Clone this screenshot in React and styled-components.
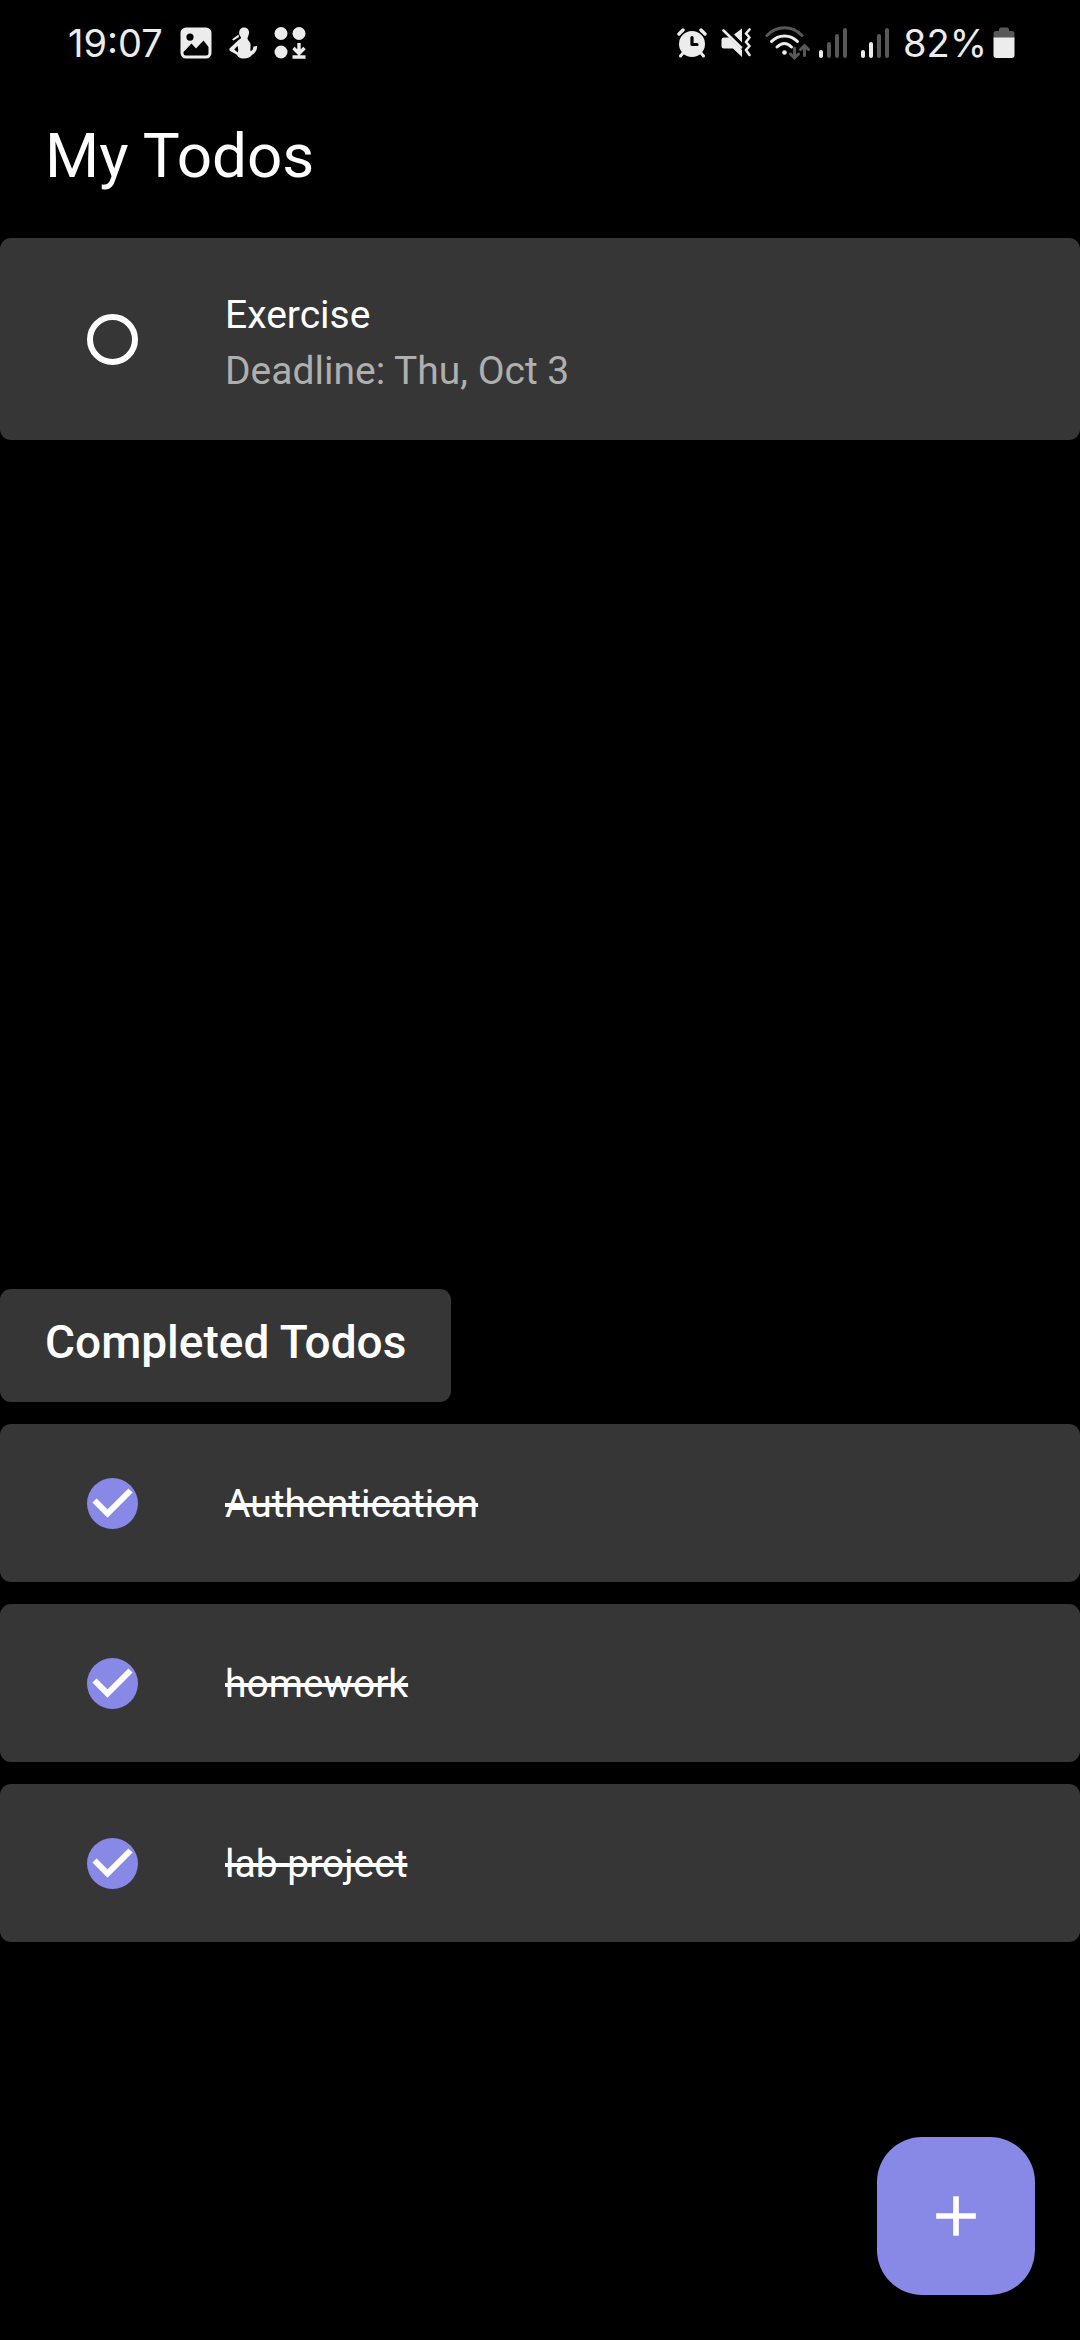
import React, { useState } from "react";
import styled, { createGlobalStyle } from "styled-components";

const GlobalStyle = createGlobalStyle`
  * { box-sizing: border-box; }
  html, body, #root { height: 100%; }
  body {
    margin: 0;
    background: #000;
    color: #fff;
    font-family: Roboto, "Liberation Sans", sans-serif;
  }
`;

const Screen = styled.div`
  min-height: 100vh;
  display: flex;
  flex-direction: column;
`;

const StatusBar = styled.div`
  display: flex;
  justify-content: space-between;
  align-items: center;
  height: 86px;
  padding: 0 65px 0 68px;
  font-family: Inter, Roboto, sans-serif;
  font-size: 38px;
  line-height: 46px;
  color: #ececec;
`;

const StatusGroup = styled.div`
  display: flex;
  align-items: center;
  gap: ${(p) => p.$gap}px;
`;

const Glyph = styled.svg`
  display: block;
  flex: none;
`;

const AppBar = styled.header`
  display: flex;
  align-items: center;
  height: 140px;
  padding: 0 45px;
  margin-bottom: 12px;
`;

const Title = styled.h1`
  margin: 0;
  font-size: 62px;
  line-height: 78px;
  font-weight: 400;
`;

const Main = styled.main`
  flex: 1;
  display: grid;
  grid-template-rows: 1fr 1fr;
`;

const List = styled.ul`
  display: flex;
  flex-direction: column;
  gap: 22px;
  margin: 0;
  padding: 0;
  list-style: none;
`;

const Section = styled.section`
  display: flex;
  flex-direction: column;
  align-items: stretch;
  gap: 22px;
`;

const SectionLabel = styled.h2`
  align-self: flex-start;
  margin: 0;
  padding: 19px 45px 25px;
  border-radius: 11px;
  background: #363636;
  font-size: 46px;
  line-height: 69px;
  font-weight: 500;
`;

const Card = styled.li`
  display: flex;
  align-items: center;
  min-height: ${(p) => (p.$tall ? 202 : 158)}px;
  padding: 0 45px;
  border-radius: 11px;
  background: #363636;
`;

const Todo = styled.label`
  display: flex;
  align-items: center;
  gap: 45px;
  cursor: pointer;
`;

const Tick = styled.span`
  display: grid;
  place-items: center;
  width: 135px;
  height: 135px;

  & > * { grid-area: 1 / 1; }
`;

const TickInput = styled.input`
  appearance: none;
  width: 51px;
  height: 51px;
  margin: 0;
  border: 6px solid #fff;
  border-radius: 50%;

  &:checked {
    border: 0;
    background: #8888e6;
  }
`;

const TickMark = styled(Glyph)`
  pointer-events: none;
`;

const TodoText = styled.span`
  display: flex;
  flex-direction: column;
  padding-top: ${(p) => (p.$tall ? 8 : 2)}px;
  font-size: 39px;
  line-height: 56px;
`;

const TodoName = styled.span`
  text-decoration: ${(p) => (p.$done ? "line-through" : "none")};
  text-decoration-thickness: 4px;
`;

const Deadline = styled.span`
  color: #afafaf;
`;

const AddButton = styled.button`
  position: fixed;
  right: 45px;
  bottom: 45px;
  display: grid;
  place-items: center;
  width: 158px;
  height: 158px;
  padding: 0;
  border: 0;
  border-radius: 45px;
  background: #8888e6;
  color: #fff;
  cursor: pointer;
`;

const PictureIcon = () => (
  <Glyph width="32" height="32" viewBox="0 0 32 32" fill="currentColor">
    <path
      fillRule="evenodd"
      d="M6 0.5h20a5.500 5.500 0 0 1 5.500 5.500v20a5.500 5.500 0 0 1-5.500 5.500H6A5.500 5.500 0 0 1 .5 26V6A5.500 5.500 0 0 1 6 .5zM10 6.500a3.600 3.600 0 1 0 0 7.200 3.600 3.600 0 0 0 0-7.200zM3.500 25l8-8.500 4.500 5 7.500-8L28.500 20v6q0 2.500-2.500 2.500H6q-2.500 0-2.500-2.500z"
    />
  </Glyph>
);

const PersonIcon = () => (
  <Glyph width="28" height="32" viewBox="0 0 28 32" fill="currentColor">
    <path
      fillRule="evenodd"
      d="M15 .5c3.500 0 5.300 2.500 5 5.500-.2 2.500-1.500 4-1.500 5.500 0 2 2.500 3 3 5.500.4 2.500-.5 5.500 0 7 2.500-.5 2.500-2 3-4.500l3.500-.5c.5 4-2 7-5 9-2 2-4 3.500-8 3.500-5 0-6-2-7.500-4L1 24q-1.500-1.500 0-3l8-7.500c1-1.200 2.500-1 3-2.500.3-1-1.500-2-1.800-4C9.800 3.500 11.500.5 15 .5zM8.500 19l-3.300 3.500 3.600 3q1-3-.3-6.500zM9.500 7.500l-6.500 5 1.500 1 5.500-3.500z"
    />
  </Glyph>
);

const AppsIcon = () => (
  <Glyph width="32" height="32" viewBox="0 0 32 32" fill="currentColor">
    <circle cx="7" cy="6.500" r="6.500" />
    <circle cx="25" cy="6.500" r="6.500" />
    <circle cx="7" cy="25" r="6.500" />
    <path d="M25 16v10M19.500 21l5.500 5.500 5.500-5.500M18.500 30h13" fill="none" stroke="currentColor" strokeWidth="3.400" />
  </Glyph>
);

const AlarmIcon = () => (
  <Glyph width="30" height="30" viewBox="0 0 30 30" fill="currentColor">
    <path d="M2 6l4-4M28 6l-4-4" stroke="currentColor" strokeWidth="3.400" strokeLinecap="round" />
    <path d="M6 25l-2.500 3M24 25l2.500 3" stroke="currentColor" strokeWidth="3" strokeLinecap="round" />
    <circle cx="15" cy="16" r="13" />
    <path d="M15 9.500v7h5" fill="none" stroke="#000" strokeWidth="3.200" strokeLinecap="round" strokeLinejoin="round" />
  </Glyph>
);

const MuteIcon = () => (
  <Glyph width="30" height="30" viewBox="0 0 30 30" fill="currentColor">
    <path d="M3 9.500h5L21 22v7l-9-8.500H3q-2.500 0-2.500-2.500v-6q0-2.500 2.500-2.500zM13 6.500L21 .5v14z" />
    <path d="M2.500 2.500L20 19.500" stroke="currentColor" strokeWidth="2.600" strokeLinecap="round" />
    <path d="M28.500 1.500l-3.500 4 3.500 4-3.500 4.500 3.500 4-3.500 4 3.500 5" fill="none" stroke="currentColor" strokeWidth="2.600" strokeLinecap="round" strokeLinejoin="round" />
  </Glyph>
);

const WifiIcon = () => (
  <Glyph width="45" height="34" viewBox="0 0 45 34" fill="none" strokeWidth="3" strokeLinecap="round">
    <path d="M2 9.500C12-.8 27-.8 37 9.500" stroke="#585858" />
    <path d="M6.500 15.500c7-7.500 19-7.500 26 0M12 21q7.500-7 14.500 0" stroke="currentColor" />
    <circle cx="19.500" cy="26.500" r="2.300" fill="currentColor" />
    <path d="M29.500 22v10M25.500 28l4 4 4-4M39.500 29.500v-10M35.500 23.500l4-4 4 4" stroke="#585858" />
  </Glyph>
);

const SignalIcon = ({ level }) => (
  <Glyph width="28" height="30" viewBox="0 0 28 30" strokeWidth="4" strokeLinecap="round">
    {[24, 16, 8, 2].map((top, i) => (
      <path key={top} d={`M${2 + i * 8} ${top}V28`} stroke={i < level ? "currentColor" : "#585858"} />
    ))}
  </Glyph>
);

const BatteryIcon = () => (
  <Glyph width="22" height="32" viewBox="0 0 22 32">
    <path d="M8 .5h6q2 0 2 2V4h3q2.500 0 2.500 3v4H.5V7q0-3 2.500-3h3V2.500Q6 .5 8 .5z" fill="#585858" />
    <path d="M.5 10.500h21V28q0 3-3 3h-15q-3 0-3-3z" fill="currentColor" />
  </Glyph>
);

const initialTodos = [
  { id: "exercise", name: "Exercise", deadline: "Thu, Oct 3", done: false },
  { id: "auth", name: "Authentication", done: true },
  { id: "homework", name: "homework", done: true },
  { id: "lab", name: "lab project", done: true },
];

const TodoCard = ({ todo, onToggle }) => (
  <Card $tall={Boolean(todo.deadline)}>
    <Todo>
      <Tick>
        <TickInput type="checkbox" checked={todo.done} onChange={() => onToggle(todo.id)} />
        {todo.done && (
          <TickMark width="51" height="51" viewBox="0 0 51 51" aria-hidden="true">
            <path d="M7.500 22.500l13 13L43.500 12.500" fill="none" stroke="#fff" strokeWidth="6" />
          </TickMark>
        )}
      </Tick>
      <TodoText $tall={Boolean(todo.deadline)}>
        <TodoName $done={todo.done}>{todo.name}</TodoName>
        {todo.deadline && <Deadline>Deadline: {todo.deadline}</Deadline>}
      </TodoText>
    </Todo>
  </Card>
);

export default function App() {
  const [todos, setTodos] = useState(initialTodos);
  const toggle = (id) =>
    setTodos((all) => all.map((t) => (t.id === id ? { ...t, done: !t.done } : t)));
  const show = (done) =>
    todos.filter((t) => t.done === done).map((t) => <TodoCard key={t.id} todo={t} onToggle={toggle} />);

  return (
    <Screen>
      <GlobalStyle />
      <StatusBar>
        <StatusGroup $gap={17}>
          <span>19:07</span>
          <PictureIcon />
          <PersonIcon />
          <AppsIcon />
        </StatusGroup>
        <StatusGroup $gap={9}>
          <StatusGroup $gap={14}>
            <AlarmIcon />
            <MuteIcon />
            <WifiIcon />
          </StatusGroup>
          <StatusGroup $gap={14}>
            <SignalIcon level={1} />
            <SignalIcon level={2} />
            <StatusGroup $gap={6}>
              <span>82%</span>
              <BatteryIcon />
            </StatusGroup>
          </StatusGroup>
        </StatusGroup>
      </StatusBar>
      <AppBar>
        <Title>My Todos</Title>
      </AppBar>
      <Main>
        <List>{show(false)}</List>
        <Section>
          <SectionLabel>Completed Todos</SectionLabel>
          <List>{show(true)}</List>
        </Section>
      </Main>
      <AddButton type="button" aria-label="Add todo">
        <Glyph width="68" height="68" viewBox="0 0 24 24" fill="currentColor">
          <path d="M19 13h-6v6h-2v-6H5v-2h6V5h2v6h6v2z" />
        </Glyph>
      </AddButton>
    </Screen>
  );
}
